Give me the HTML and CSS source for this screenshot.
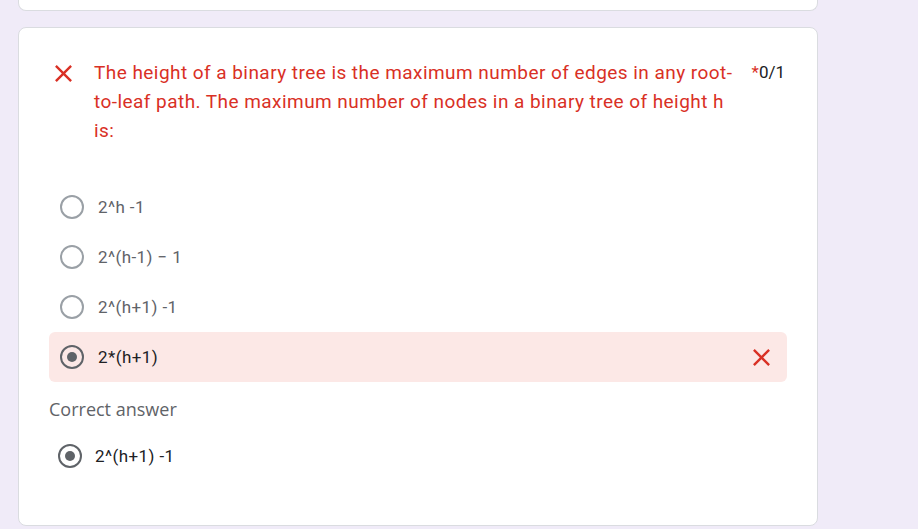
FILE: index.html
```html
<!DOCTYPE html>
<html>
<head>
<meta charset="utf-8">
<link rel="stylesheet" href="styles.css">
</head>
<body>
<div class="page">
  <div class="card card-prev"></div>
  <div class="card card-q">
    <div class="q-head">
      <svg class="x-icon" viewBox="0 0 24 24" width="29" height="29"><path d="M19 6.41L17.59 5 12 10.59 6.41 5 5 6.41 10.59 12 5 17.59 6.41 19 12 13.41 17.59 19 19 17.59 13.41 12z"/></svg>
      <div class="q-title">The height of a binary tree is the maximum number of edges in any root-to-leaf path. The maximum number of nodes in a binary tree of height h is:</div>
      <div class="q-score"><span class="req">*</span>0/1</div>
    </div>
    <div class="options">
      <div class="opt"><span class="radio"></span><span class="opt-text">2^h -1</span></div>
      <div class="opt"><span class="radio"></span><span class="opt-text">2^(h-1) &minus; 1</span></div>
      <div class="opt"><span class="radio"></span><span class="opt-text">2^(h+1) -1</span></div>
      <div class="opt opt-wrong"><span class="radio radio-on"></span><span class="opt-text">2*(h+1)</span>
        <svg class="x-icon x-right" viewBox="0 0 24 24" width="29" height="29"><path d="M19 6.41L17.59 5 12 10.59 6.41 5 5 6.41 10.59 12 5 17.59 6.41 19 12 13.41 17.59 19 19 17.59 13.41 12z"/></svg>
      </div>
    </div>
    <div class="correct-label">Correct answer</div>
    <div class="correct-opt"><span class="radio radio-on"></span><span class="opt-text">2^(h+1) -1</span></div>
  </div>
</div>
</body>
</html>
```
FILE: styles.css
```css
html, body {
  margin: 0;
  padding: 0;
  background: #f0ebf8;
  font-family: Roboto, "Liberation Sans", Arial, sans-serif;
}
.page {
  width: 800px;
  margin-left: 18px;
  display: flex;
  flex-direction: column;
  gap: 16px;
}
.card {
  background: #fff;
  border: 1px solid #dadce0;
  border-radius: 8px;
  box-sizing: border-box;
}
.card-prev {
  height: 40px;
  margin-top: -29px;
  border-top: none;
}
.card-q {
  height: 499px;
  padding: 30px 30px 0 30px;
}
.q-head {
  display: flex;
  align-items: flex-start;
}
.x-icon {
  fill: #d93025;
  flex-shrink: 0;
}
.q-head .x-icon {
  margin-top: 1px;
}
.q-title {
  margin-left: 16px;
  color: #d93025;
  font-size: 19px;
  letter-spacing: 0.45px;
  line-height: 29px;
  width: 645px;
}
.q-score {
  margin-left: auto;
  color: #202124;
  font-size: 17px;
  line-height: 29px;
  padding-right: 2px;
}
.req {
  color: #d93025;
}
.options {
  margin-top: 37px;
  display: flex;
  flex-direction: column;
}
.opt {
  height: 50px;
  display: flex;
  align-items: center;
  padding: 0 11px;
  border-radius: 6px;
}
.radio {
  width: 20px;
  height: 20px;
  border: 2px solid #9aa0a6;
  border-radius: 50%;
  flex-shrink: 0;
  display: flex;
  align-items: center;
  justify-content: center;
  box-sizing: content-box;
}
.radio-on {
  border-color: #5f6368;
}
.radio-on::after {
  content: "";
  width: 10px;
  height: 10px;
  border-radius: 50%;
  background: #5f6368;
}
.opt-text {
  margin-left: 14px;
  font-size: 17px;
  letter-spacing: 0.4px;
  color: #5f6368;
}
.opt-wrong {
  background: #fce8e6;
}
.opt-wrong .opt-text {
  color: #202124;
}
.x-right {
  margin-left: auto;
}
.correct-label {
  margin-top: 15px;
  font-size: 18px;
  color: #5f6368;
  line-height: 24px;
  font-family: "Open Sans", Roboto, sans-serif;
  font-weight: 500;
}
.correct-opt {
  display: flex;
  align-items: center;
  height: 50px;
  margin-top: 10px;
  padding-left: 9px;
}
.correct-opt .opt-text {
  margin-left: 13px;
  color: #202124;
}
```
